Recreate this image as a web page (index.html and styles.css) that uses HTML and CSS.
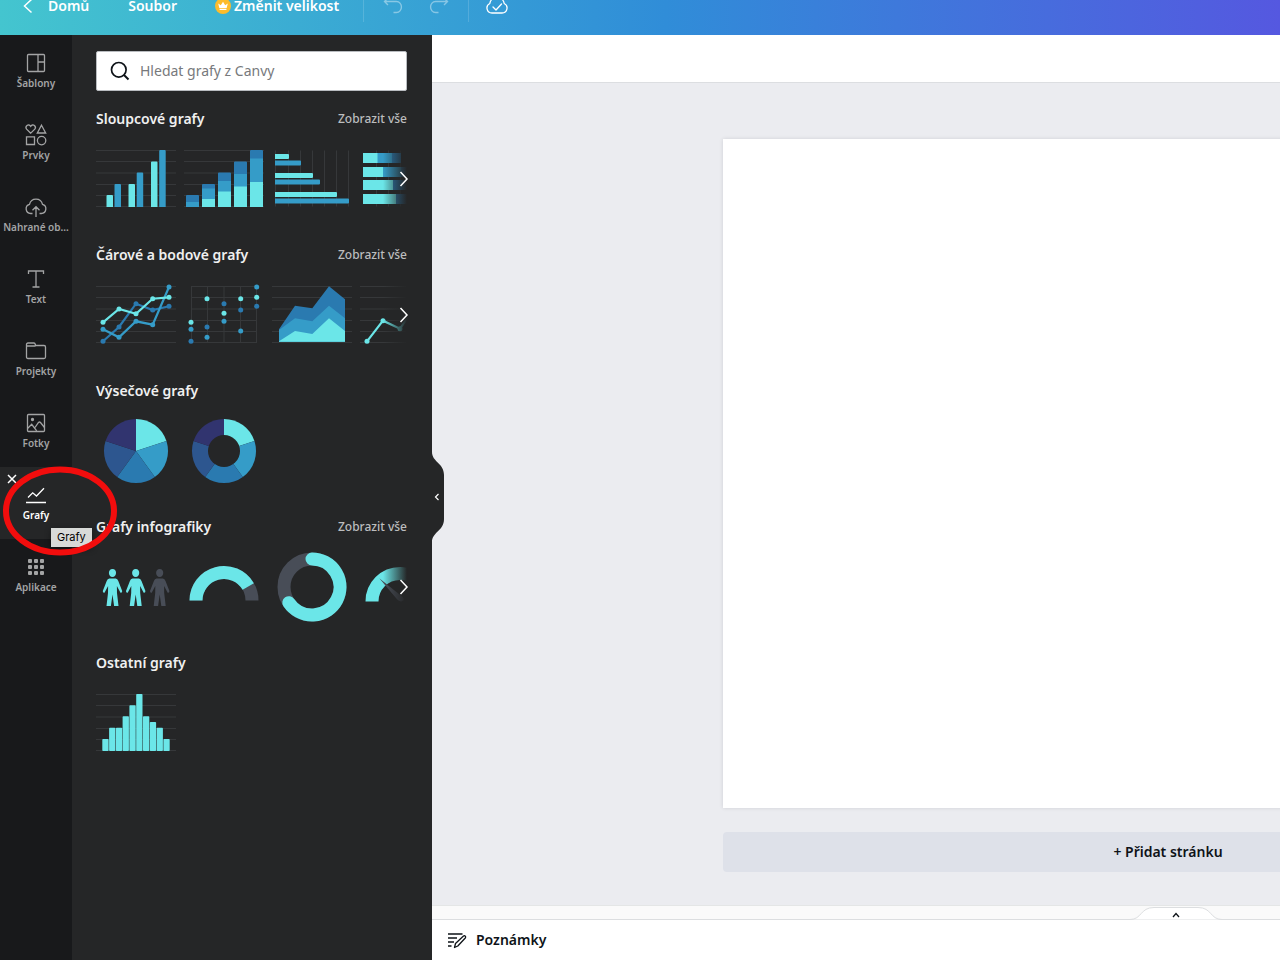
FILE: index.html
```html
<!DOCTYPE html>
<html lang="cs">
<head>
<meta charset="utf-8">
<meta name="viewport" content="width=device-width, initial-scale=1">
<title>Grafy</title>
<link rel="stylesheet" href="styles.css">
</head>
<body>
<svg class="defs" aria-hidden="true">
  <symbol id="rows" viewBox="0 0 80 80"><path d="M0 11.500h80M0 22.500h80M0 34h80M0 45.500h80M0 56.500h80M0 67.500h80" stroke="#36383a" stroke-width="1" fill="none"/></symbol>
</svg>

<header class="topbar">
  <button class="top-btn home"><svg width="10" height="16" viewBox="0 0 10 16"><path d="M8.500 1.500 1.500 8l7 6.500" fill="none" stroke="currentColor" stroke-width="1.500"/></svg><span>Domů</span></button>
  <button class="top-btn file"><span>Soubor</span></button>
  <button class="top-btn resize"><svg width="16" height="16" viewBox="0 0 16 16"><circle cx="8" cy="8" r="8" fill="#fdbc2c"/><path d="M4.300 10 3.200 5.500l2.600 1.700L8 3.700l2.200 3.500 2.600-1.700L11.700 10zM4.600 10.800h6.800v1.200H4.600z" fill="#fff"/></svg><span>Změnit velikost</span></button>
  <span class="top-line"></span>
  <button class="top-btn dim undo" aria-label="Zpět"><svg width="20" height="20" viewBox="0 0 20 20"><path d="M5 2 1.500 5.500 5 9M1.500 5.500h12a4.500 5 0 0 1 0 11H10.500" fill="none" stroke="currentColor" stroke-width="1.400"/></svg></button>
  <button class="top-btn dim redo" aria-label="Znovu"><svg width="20" height="20" viewBox="0 0 20 20"><path d="m15 2 3.500 3.500L15 9M18.500 5.500h-12a4.500 5 0 0 0 0 11H9.500" fill="none" stroke="currentColor" stroke-width="1.400"/></svg></button>
  <span class="top-line"></span>
  <button class="top-btn saved" aria-label="Uloženo"><svg width="24" height="24" viewBox="0 0 24 24"><path d="M7 19a5 5 0 0 1-2.200-9.500 7.300 7.300 0 0 1 14.400 0A5 5 0 0 1 17 19zM8 13l3 3 5.500-6" fill="none" stroke="currentColor" stroke-width="1.300" stroke-linecap="round" stroke-linejoin="round"/></svg></button>
</header>

<div class="workspace">
  <nav class="rail">
    <button class="rail-item"><svg viewBox="0 0 24 24"><rect x="3.500" y="3.500" width="17" height="17" rx="1"/><path d="M14 3.500v17M14 11h6.500"/></svg><span>Šablony</span></button>
    <button class="rail-item"><svg viewBox="0 0 24 24"><path d="M6.700 10.200 2.600 6.100C.6 3.600 4.400 0 6.700 3.300 9 0 12.800 3.600 10.800 6.100zM17.500 2.200l4.200 7.800h-8.400zM2.500 13.800h8v7.700h-8z"/><circle cx="17.600" cy="17.600" r="4.200"/></svg><span>Prvky</span></button>
    <button class="rail-item"><svg viewBox="0 0 24 24"><path d="M8.500 18.500H6.700a4.700 4.700 0 0 1-1.200-9.200 6.700 6.700 0 0 1 13 0 4.700 4.700 0 0 1-1.200 9.200h-1.800M12 22V12M8.500 15.200 12 11.700l3.500 3.500"/></svg><span>Nahrané ob...</span></button>
    <button class="rail-item"><svg viewBox="0 0 24 24"><path d="M4.500 7V4h15v3M12 4v16M8.500 20h7"/></svg><span>Text</span></button>
    <button class="rail-item"><svg viewBox="0 0 24 24"><path d="M2.500 18V5.500q0-1.500 1.500-1.500h6q1 0 1.200 1l.4 1.500H20q1.500 0 1.500 1.500v10q0 1.500-1.500 1.500H4q-1.500 0-1.500-1.500zM2.500 7h9"/></svg><span>Projekty</span></button>
    <button class="rail-item"><svg viewBox="0 0 24 24"><rect x="3.500" y="3.500" width="17" height="17" rx="1"/><circle cx="8.500" cy="8.500" r="1" fill="currentColor"/><path d="m3.500 17.500 4.200-4.200 5 6.500M11 16.500l3.500-5q1-1 2 0l4 5"/></svg><span>Fotky</span></button>
    <button class="rail-item active"><svg viewBox="0 0 24 24"><path d="M2 19.500h20M4 14.500l4.700-4.700 3.800 3.200L20 5.200"/></svg><span>Grafy</span></button>
    <button class="rail-item"><svg viewBox="0 0 24 24"><g fill="currentColor" stroke="none"><rect x="4" y="4" width="4" height="4" rx="1"/><rect x="10" y="4" width="4" height="4" rx="1"/><rect x="16" y="4" width="4" height="4" rx="1"/><rect x="4" y="10" width="4" height="4" rx="1"/><rect x="10" y="10" width="4" height="4" rx="1"/><rect x="16" y="10" width="4" height="4" rx="1"/><rect x="4" y="16" width="4" height="4" rx="1"/><rect x="10" y="16" width="4" height="4" rx="1"/><rect x="16" y="16" width="4" height="4" rx="1"/></g></svg><span>Aplikace</span></button>
    <button class="rail-close" aria-label="Zavřít"><svg width="10" height="10" viewBox="0 0 10 10"><path d="m1 1 8 8M9 1 1 9" stroke="currentColor" stroke-width="1.500"/></svg></button>
  </nav>

  <aside class="panel">
    <label class="search">
      <svg width="20" height="20" viewBox="0 0 20 20"><circle cx="8.800" cy="8.800" r="7.300" fill="none" stroke="#0e1318" stroke-width="1.700"/><path d="m14 14 4.500 4.500" stroke="#0e1318" stroke-width="2"/></svg>
      <input type="text" placeholder="Hledat grafy z Canvy" aria-label="Hledat grafy z Canvy">
    </label>

    <section class="group">
      <div class="group-head"><h2>Sloupcové grafy</h2><a href="#">Zobrazit vše</a></div>
      <div class="thumbs">
        <svg class="thumb" viewBox="0 0 80 80"><use href="#rows"/><path class="c1" d="M10.500 57q0-1 1-1H16q1 0 1 1v11h-6.500zM32.500 46q0-1 1-1H38q1 0 1 1v22h-6.500zM55 23.500q0-1 1-1h4.500q1 0 1 1V68H55z"/><path class="c2" d="M18.500 46q0-1 1-1H24q1 0 1 1v22h-6.500zM40.700 34.500q0-1 1-1h4.500q1 0 1 1V68h-6.500zM63.200 12q0-1 1-1h4.500q1 0 1 1v56h-6.500z"/></svg>
        <svg class="thumb" viewBox="0 0 80 80"><use href="#rows"/><path class="c3" d="M2 57q0-1 1-1h11q1 0 1 1v11H2zM18 46q0-1 1-1h11q1 0 1 1v22H18zM34 34.500q0-1 1-1h11q1 0 1 1V68H34zM50 23.500q0-1 1-1h11q1 0 1 1V68H50zM66 12q0-1 1-1h11q1 0 1 1v56H66z"/><path class="c2" d="M2 63h13v5H2zM18 49.500h13V68H18zM34 42h13v26H34zM50 35h13v33H50zM66 19.500h13V68H66z"/><path class="c1" d="M18 60h13v8H18zM34 52.500h13V68H34zM50 47.500h13V68H50zM66 43h13v25H66z"/></svg>
        <svg class="thumb" viewBox="0 0 80 80"><path class="grid" d="M3.500 11.500v56M16.500 11.500v56M28.500 11.500v56M40.500 11.500v56M52.500 11.500v56M64.500 11.500v56M76.500 11.500v56"/><path class="c1" d="M3 15h13q1 0 1 1v3q0 1-1 1H3zM3 34h37q1 0 1 1v3q0 1-1 1H3zM3 53h61q1 0 1 1v3q0 1-1 1H3z"/><path class="c2" d="M3 21.500h25q1 0 1 1v3q0 1-1 1H3zM3 40.500h44q1 0 1 1v3q0 1-1 1H3zM3 59.500h73q1 0 1 1v3q0 1-1 1H3z"/></svg>
        <svg class="thumb" viewBox="0 0 80 80"><path class="grid" d="M16.500 11.500v56M28.500 11.500v56M40.500 11.500v56"/><path class="c3" d="M3 14h38v10H3zM3 28h45v10H3zM3 41h45v10H3zM3 55h45v10H3z"/><path class="c2" d="M3 14h29v10H3zM3 28h38v10H3z"/><path class="c1" d="M3 14h14.500v10H3zM3 28h20v10H3zM3 41h30v10H3zM3 55h33v10H3z"/></svg>
      </div>
      <button class="next" aria-label="Další"><svg width="10" height="16" viewBox="0 0 10 16"><path d="m1.500 1 6.500 7-6.500 7"/></svg></button>
    </section>

    <section class="group">
      <div class="group-head"><h2>Čárové a bodové grafy</h2><a href="#">Zobrazit vše</a></div>
      <div class="thumbs">
        <svg class="thumb" viewBox="0 0 80 80"><use href="#rows"/>
          <path class="l3" d="m7 66.300 16-14.300 17-23.300L56.700 35 73 31.300"/><g class="c3"><circle cx="7" cy="66.300" r="2.500"/><circle cx="23" cy="52" r="2.500"/><circle cx="40" cy="28.700" r="2.500"/><circle cx="56.700" cy="35" r="2.500"/><circle cx="73" cy="31.300" r="2.500"/></g>
          <path class="l2" d="m7 54.300 16 8 17-16 16.700 3.400L73 12"/><g class="c2"><circle cx="7" cy="54.300" r="2.500"/><circle cx="23" cy="62.300" r="2.500"/><circle cx="40" cy="46.300" r="2.500"/><circle cx="56.700" cy="49.700" r="2.500"/><circle cx="73" cy="12" r="2.500"/></g>
          <path class="l1" d="M7 47.300 23 34l17 4.700 16.700-15L73 22.300"/><g class="c1"><circle cx="7" cy="47.300" r="2.500"/><circle cx="23" cy="34" r="2.500"/><circle cx="40" cy="38.700" r="2.500"/><circle cx="56.700" cy="23.700" r="2.500"/><circle cx="73" cy="22.300" r="2.500"/></g></svg>
        <svg class="thumb" viewBox="0 0 80 80"><path class="grid" d="M7 11.500h66M7 22.500h66M7 34h66M7 45.500h66M7 56.500h66M7 67.500h66M7.500 11.500v56M23.500 11.500v56M40 11.500v56M56.500 11.500v56M72.500 11.500v56"/>
          <g class="c1"><circle cx="7" cy="47.300" r="2.500"/><circle cx="23" cy="23.700" r="2.500"/><circle cx="40" cy="38.300" r="2.500"/><circle cx="56.700" cy="23.700" r="2.500"/><circle cx="72.700" cy="22.300" r="2.500"/></g>
          <g class="c2"><circle cx="7" cy="54.300" r="2.500"/><circle cx="23" cy="62.300" r="2.500"/><circle cx="40" cy="46.300" r="2.500"/><circle cx="56.700" cy="56" r="2.500"/><circle cx="72.700" cy="12" r="2.500"/></g>
          <g class="c3"><circle cx="7" cy="66.300" r="2.500"/><circle cx="23" cy="52" r="2.500"/><circle cx="40" cy="28.700" r="2.500"/><circle cx="56.700" cy="35" r="2.500"/><circle cx="72.700" cy="31.300" r="2.500"/></g></svg>
        <svg class="thumb" viewBox="0 0 80 80"><use href="#rows"/><path class="c3" d="m7 54.300 16-23.600 17.300 2.600L57 11.300l16 13v42.400H7z"/><path class="c2" d="m7 55 16-11.700 17.300 3L57 30.700l16 12.600v23.400H7z"/><path class="c1" d="m7 66.300 16-10.300 17.300 3L57 43.300 73 56v10.700H7z"/></svg>
        <svg class="thumb" viewBox="0 0 80 80"><use href="#rows"/><path class="l1" d="m7 66.300 16-20.600 17 8L57 30"/><g class="c1"><circle cx="7" cy="66.300" r="2.500"/><circle cx="23" cy="45.700" r="2.500"/><circle cx="40" cy="53.700" r="2.500"/></g></svg>
      </div>
      <button class="next" aria-label="Další"><svg width="10" height="16" viewBox="0 0 10 16"><path d="m1.500 1 6.500 7-6.500 7"/></svg></button>
    </section>

    <section class="group">
      <div class="group-head"><h2>Výsečové grafy</h2></div>
      <div class="thumbs">
        <svg class="thumb" viewBox="0 0 80 80"><path class="c1" d="M40 40V8a32 32 0 0 1 30.430 22.110z"/><path class="c2" d="m40 40 30.430-9.890a32 32 0 0 1-11.620 35.780z"/><path class="c3" d="m40 40 18.810 25.890a32 32 0 0 1-37.620 0z"/><path class="c4" d="M40 40 21.190 65.890A32 32 0 0 1 9.570 30.110z"/><path class="c5" d="M40 40 9.570 30.110A32 32 0 0 1 40 8z"/></svg>
        <svg class="thumb" viewBox="0 0 80 80"><path class="c1" d="M40 40V8a32 32 0 0 1 30.430 22.110z"/><path class="c2" d="m40 40 30.430-9.890a32 32 0 0 1-11.620 35.780z"/><path class="c3" d="m40 40 18.810 25.890a32 32 0 0 1-37.620 0z"/><path class="c4" d="M40 40 21.190 65.890A32 32 0 0 1 9.570 30.110z"/><path class="c5" d="M40 40 9.570 30.110A32 32 0 0 1 40 8z"/><circle cx="40" cy="40" r="16" fill="#252627"/></svg>
      </div>
    </section>

    <section class="group">
      <div class="group-head"><h2>Grafy infografiky</h2><a href="#">Zobrazit vše</a></div>
      <div class="thumbs">
        <svg class="thumb" viewBox="0 0 80 80"><defs><path id="man" d="M0-18.500c5 0 4.500 8 0 8s-5-8 0-8zM-3.200-9h6.400q1.800.3 2.600 2.500L9.700 3.600Q9.800 5.600 8 5.200L4.400-1.500 4.500 5.500 6 18.500H1.600L0 7-1.600 18.500H-6L-4.500 5.500-4.400-1.500-8 5.200Q-9.800 5.600-9.700 3.600L-5.800-6.500Q-5-8.700-3.200-9z"/></defs><use class="c1" href="#man" x="16.500" y="40.500"/><use class="c1" href="#man" x="39.700" y="40.500"/><use class="c6" href="#man" x="63.700" y="40.500"/></svg>
        <svg class="thumb" viewBox="0 0 80 80"><path class="arc a6" d="M12 53.500a28 28 0 0 1 56 0"/><path class="arc a1" d="M12 53.500a28 28 0 0 1 52.250-14"/></svg>
        <svg class="thumb" viewBox="0 0 80 80"><circle class="arc a6" cx="40" cy="40" r="28"/><path class="arc a1" stroke-linecap="round" d="M40 12a28 28 0 1 1-23.200 43.660"/></svg>
        <svg class="thumb" viewBox="0 0 80 80"><path class="arc a1" d="M12 54.500a28 28 0 0 1 56 0"/><path d="m19.300 31.300 23.700 19q2 3-1 4-3 .5-5-2z" fill="#484d57"/></svg>
      </div>
      <button class="next" aria-label="Další"><svg width="10" height="16" viewBox="0 0 10 16"><path d="m1.500 1 6.500 7-6.500 7"/></svg></button>
    </section>

    <section class="group">
      <div class="group-head"><h2>Ostatní grafy</h2></div>
      <div class="thumbs">
        <svg class="thumb" viewBox="0 0 80 80"><use href="#rows"/><g class="c1"><rect x="6.300" y="56" width="6.300" height="12" rx=".8"/><rect x="13.100" y="44.700" width="6.300" height="23.300" rx=".8"/><rect x="19.900" y="44.700" width="6.300" height="23.300" rx=".8"/><rect x="26.600" y="33.300" width="6.300" height="34.700" rx=".8"/><rect x="33.400" y="22.300" width="6.300" height="45.700" rx=".8"/><rect x="40.200" y="11" width="6.300" height="57" rx=".8"/><rect x="47" y="33.300" width="6.300" height="34.700" rx=".8"/><rect x="53.800" y="39" width="6.300" height="29" rx=".8"/><rect x="60.600" y="44.700" width="6.300" height="23.300" rx=".8"/><rect x="67.400" y="56" width="6.300" height="12" rx=".8"/></g></svg>
      </div>
    </section>
    <button class="collapse" aria-label="Skrýt panel"><svg width="13" height="96" viewBox="0 0 13 96"><path d="M0 0v3c0 10 12 11 12 23v44c0 12-12 13-12 23v3z" fill="#252627"/><path d="m6.500 45-3 3 3 3" fill="none" stroke="#fff" stroke-width="1.200"/></svg></button>
  </aside>

  <main class="editor">
    <div class="toolbar"></div>
    <div class="canvas">
      <div class="page"></div>
      <button class="add-page">+ Přidat stránku</button>
    </div>
    <div class="strip"><button class="strip-tab" aria-label="Zobrazit stránky"><svg width="92" height="14" viewBox="0 0 92 14"><path d="M0 13.500c12 0 10-12 24-12h44c14 0 12 12 24 12" fill="#fff" stroke="#dcdee0"/><path d="m43 11 3-3.500 3 3.500" fill="none" stroke="#0e1318" stroke-width="1.300"/></svg></button></div>
    <footer class="notes">
      <button class="notes-btn"><svg width="20" height="20" viewBox="0 0 20 20"><path d="M1 4h14.500M1 8h9M1 12h6M1 16h3.500" stroke="#0e1318" stroke-width="1.500"/><path d="m7.500 17.500 1-4 8-7.500q1-.7 1.800.2.800.9 0 1.800l-7.500 8z" fill="#fff" stroke="#0e1318" stroke-width="1.300" stroke-linejoin="round"/></svg><span>Poznámky</span></button>
    </footer>
  </main>
</div>

<div class="tooltip" role="tooltip">Grafy</div>
<svg class="ring" width="116" height="90" viewBox="0 0 116 90"><ellipse cx="58" cy="45" rx="54" ry="41.500" fill="none" stroke="#f20d0d" stroke-width="6"/></svg>
</body>
</html>
```
FILE: styles.css
```css
* { box-sizing: border-box; }
body {
  margin: 0;
  height: 100vh;
  overflow: hidden;
  display: flex;
  flex-direction: column;
  position: relative;
  font-family: "Noto Sans", "Open Sans", sans-serif;
  font-size: 14px;
  color: #0e1318;
}
button {
  font: inherit;
  color: inherit;
  background: none;
  border: 0;
  padding: 0;
}
svg { display: block; flex: none; }
.defs { position: absolute; width: 0; height: 0; }

.topbar {
  flex: none;
  height: 58px;
  margin-top: -23px;
  padding-left: 23px;
  display: flex;
  align-items: center;
  color: #fff;
  background: linear-gradient(90deg, #44c5cf 0%, #3499d6 41%, #308dd8 52%, #5558e0 100%);
}
.top-btn {
  display: flex;
  align-items: center;
  font-weight: 600;
  white-space: nowrap;
}
.top-btn span, .notes-btn span { padding-bottom: 2px; }
.home { gap: 15px; }
.file { margin-left: 39px; }
.resize { margin-left: 38px; gap: 3px; }
.top-line { width: 1px; height: 32px; background: rgba(255, 255, 255, .15); margin-left: 24px; }
.dim { opacity: .4; }
.undo { margin-left: 19px; }
.redo { margin-left: 26px; }
.redo + .top-line { margin-left: 19px; }
.saved { margin-left: 16px; }

.workspace { flex: 1; min-height: 0; display: flex; }

.rail {
  flex: none;
  width: 72px;
  background: #18191b;
  position: relative;
}
.rail-item {
  width: 100%;
  height: 72px;
  padding-top: 16px;
  display: flex;
  flex-direction: column;
  align-items: center;
  gap: 2px;
  color: #a3a4a5;
  font-size: 10px;
  line-height: 12px;
  font-weight: 600;
  white-space: nowrap;
}
.rail-item > svg {
  width: 24px;
  height: 24px;
  fill: none;
  stroke: currentColor;
  stroke-width: 1.3;
}
.rail-item.active { background: #252627; color: #fff; }
.rail-close { position: absolute; left: 7px; top: 439px; color: #fff; }

.panel {
  flex: none;
  width: 360px;
  padding: 16px 25px 0 24px;
  background: #252627;
  color: #f0f0f0;
  position: relative;
}
.search {
  height: 40px;
  padding: 0 13px;
  margin-bottom: 16px;
  display: flex;
  align-items: center;
  gap: 10px;
  background: #fff;
  border: 1px solid #b9bcc0;
  border-radius: 2px;
}
.search input {
  flex: 1;
  min-width: 0;
  padding: 0 0 2px;
  border: 0;
  outline: 0;
  font: inherit;
  background: none;
}
.search input::placeholder { color: #77797c; opacity: 1; }

.group { position: relative; margin-bottom: 24px; }
.group-head {
  height: 22px;
  margin-bottom: 10px;
  display: flex;
  align-items: center;
  justify-content: space-between;
}
.group-head h2 { margin: 0; font-size: 14px; font-weight: 600; }
.group-head a { font-size: 12px; font-weight: 500; color: #bcbdbe; text-decoration: none; }
.thumbs { display: flex; gap: 8px; overflow: hidden; }
.thumb { width: 80px; height: 80px; }
.next {
  position: absolute;
  right: -2px;
  bottom: 0;
  width: 26px;
  height: 80px;
  display: flex;
  align-items: center;
  justify-content: flex-end;
  background: linear-gradient(90deg, rgba(37, 38, 39, 0), #252627 92%);
}
.next path { fill: none; stroke: #fff; stroke-width: 1.5; }
.collapse { position: absolute; left: 100%; top: 414px; z-index: 2; }

.c1 { fill: #6be6e8; }
.c2 { fill: #359cc8; }
.c3 { fill: #2a7ab0; }
.c4 { fill: #2d568f; }
.c5 { fill: #31346f; }
.c6 { fill: #484d57; }
.l1, .l2, .l3 { fill: none; stroke-width: 2.2; }
.l1 { stroke: #6be6e8; }
.l2 { stroke: #359cc8; }
.l3 { stroke: #2a7ab0; }
.arc { fill: none; stroke-width: 13; }
.a1 { stroke: #6be6e8; }
.a6 { stroke: #484d57; }
.grid { fill: none; stroke: #36383a; }

.editor {
  flex: 1;
  min-width: 0;
  display: flex;
  flex-direction: column;
  overflow: hidden;
}
.toolbar { flex: none; height: 48px; background: #fff; border-bottom: 1px solid #dcdee1; }
.canvas {
  flex: 1;
  min-height: 0;
  padding: 56px 0 33px 291px;
  display: flex;
  flex-direction: column;
  gap: 24px;
  background: #ebecf0;
}
.page {
  flex: 1;
  width: 890px;
  background: #fff;
  box-shadow: 0 0 4px rgba(14, 19, 24, .12);
}
.add-page {
  flex: none;
  width: 890px;
  height: 40px;
  padding-bottom: 2px;
  border-radius: 4px;
  background: #dee1e9;
  font-weight: 600;
}
.strip {
  flex: none;
  height: 15px;
  padding-left: 698px;
  display: flex;
  align-items: flex-end;
  background: #fafafa;
  border-top: 1px solid #e4e6e6;
  border-bottom: 1px solid #dcdee0;
}
.strip-tab { margin-bottom: -1px; }
.notes { flex: none; height: 40px; padding-left: 15px; display: flex; align-items: center; background: #fff; }
.notes-btn { display: flex; align-items: center; gap: 9px; font-weight: 600; }

.tooltip {
  position: absolute;
  left: 51px;
  top: 528px;
  padding: 3px 6px;
  font: 11px/13px Inter, sans-serif;
  color: #000;
  background: #d8dad8;
  box-shadow: 0 2px 6px rgba(0, 0, 0, .4);
}
.ring { position: absolute; left: 2px; top: 466px; pointer-events: none; }
```
